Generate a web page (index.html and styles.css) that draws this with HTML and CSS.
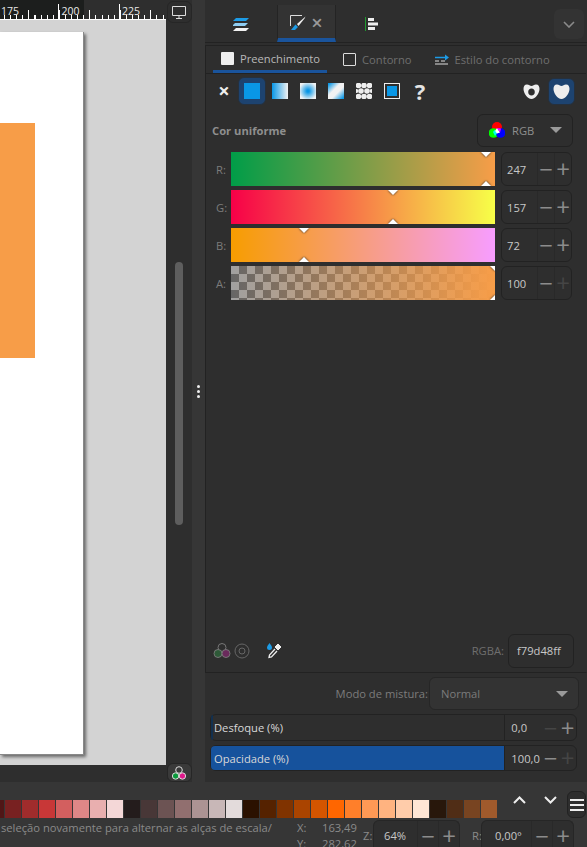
FILE: index.html
```html
<!DOCTYPE html>
<html lang="pt">
<head>
  <meta charset="UTF-8" />
  <title>Preenchimento e contorno</title>
  <link rel="stylesheet" href="styles.css">
</head>
<body>
  <div class="main">
    <div class="canvas-col">
      <div class="ruler">
        <span class="ruler-num">175</span>
        <span class="ruler-num">200</span>
        <span class="ruler-num">225</span>
      </div>
      <div class="canvas">
        <div class="page"><div class="orange-rect"></div></div>
      </div>
      <div class="hscroll"></div>
    </div>

    <div class="vscroll">
      <button class="display-btn">
        <svg width="14" height="13" viewBox="0 0 14 13"><path d="M.5.5h13v9H.5zM4 12.500h6M7 10v2" fill="none" stroke="#ddd"/></svg>
      </button>
      <div class="vthumb"></div>
      <button class="cms-btn">
        <svg width="16" height="16" viewBox="0 0 16 16">
          <circle cx="8" cy="5" r="3.300" fill="none" stroke="#ddd"/>
          <circle cx="4.600" cy="11" r="3.200" fill="#0a9a3c" stroke="#ddd"/>
          <circle cx="11.400" cy="11" r="3.200" fill="#e0188c" stroke="#ddd"/>
        </svg>
      </button>
    </div>

    <div class="handle"><i></i><i></i><i></i></div>

    <div class="panel">
      <div class="tabs">
        <div class="tab tab-layers">
          <svg width="16" height="13" viewBox="0 0 16 13">
            <path d="M3 0h13l-3 3H0z" fill="#1c9be6"/>
            <path d="M2 5h13l-3 3H-1z" fill="#8fcdf2"/>
            <path d="M3 10h13l-3 3H0z" fill="#f2f2f2"/>
          </svg>
        </div>
        <div class="tab tab-fill">
          <svg width="16" height="16" viewBox="0 0 16 16">
            <path d="M12 .5H.5V11" fill="none" stroke="#ddd"/>
            <path d="M15.500 1.500 7 9l1.500 2 6-7.500z" fill="#eee"/>
            <path d="M5.500 9.500 8 12 5 15H1z" fill="#1c9be6"/>
          </svg>
          <span class="tab-x">×</span>
        </div>
        <div class="tab tab-align">
          <svg width="14" height="14" viewBox="0 0 14 14">
            <path d="M.5 0v14" stroke="#1f9a2e"/>
            <path d="M3 1h6v3H3zM3 5.500h10v3H3zM3 10h7v3H3z" fill="#eee"/>
          </svg>
        </div>
        <button class="tabs-more">
          <svg width="12" height="7" viewBox="0 0 12 7"><path d="M1 1l5 5 5-5" fill="none" stroke="#8a8a8a" stroke-width="1.600"/></svg>
        </button>
      </div>

      <div class="frame">
        <div class="subtabs">
          <div class="subtab subtab-on"><span class="check-full"></span>Preenchimento</div>
          <div class="subtab subtab-line"><span class="check-line"></span>Contorno</div>
          <div class="subtab">
            <svg width="14" height="12" viewBox="0 0 14 12">
              <path d="M0 4.500h11" stroke="#1c9be6" stroke-width="1.500"/>
              <path d="M10 1.500l4 3-4 3z" fill="#1c9be6"/>
              <path d="M0 8h4M6 8h4M0 11h13" stroke="#ddd"/>
            </svg>
            Estilo do contorno
          </div>
        </div>

        <div class="paint-row">
          <span class="paint-x">×</span>
          <div class="paint-btn paint-on"><span class="p-flat"></span></div>
          <div class="paint-btn"><span class="p-linear"></span></div>
          <div class="paint-btn"><span class="p-radial"></span></div>
          <div class="paint-btn"><span class="p-mesh"></span></div>
          <div class="paint-btn">
            <svg width="16" height="16" viewBox="0 0 16 16">
              <g fill="#eee"><circle cx="2.500" cy="2.500" r="2.800"/><circle cx="8" cy="2.500" r="2.800"/><circle cx="13.500" cy="2.500" r="2.800"/><circle cx="2.500" cy="13.500" r="2.800"/><circle cx="8" cy="13.500" r="2.800"/><circle cx="13.500" cy="13.500" r="2.800"/><circle cx="5" cy="8" r="2.800"/><circle cx="11" cy="8" r="2.800"/><circle cx="0.500" cy="8" r="2"/><circle cx="15.500" cy="8" r="2"/></g>
            </svg>
          </div>
          <div class="paint-btn"><span class="p-swatch"></span></div>
          <div class="paint-btn paint-q">?</div>
          <div class="rule-btns">
            <div class="rule-btn">
              <svg width="17" height="17" viewBox="0 0 17 17"><path fill-rule="evenodd" d="M4 1.500C6 1.500 7 3 8.500 3S11 1.500 13 1.500C15.500 1.500 16.500 3.500 16.500 6 16.500 10 12.500 16 8.500 16S.5 10 .5 6C.5 3.500 1.500 1.500 4 1.500zM8.500 5.500c-2 0-3.300 1.500-3.300 3.500s1.300 3.500 3.300 3.500S11.800 11 11.800 9 10.500 5.500 8.500 5.500z" fill="#eee"/></svg>
            </div>
            <div class="rule-btn rule-on">
              <svg width="17" height="17" viewBox="0 0 17 17"><path d="M4 1.500C6 1.500 7 3 8.500 3S11 1.500 13 1.500C15.500 1.500 16.500 3.500 16.500 6 16.500 10 12.500 16 8.500 16S.5 10 .5 6C.5 3.500 1.500 1.500 4 1.500z" fill="#eee"/></svg>
            </div>
          </div>
        </div>

        <div class="mode-row">
          <span class="mode-title">Cor uniforme</span>
          <div class="rgb-combo">
            <svg width="16" height="16" viewBox="0 0 16 16">
              <circle cx="8" cy="5" r="5" fill="#f00"/>
              <circle cx="4.500" cy="11" r="4.800" fill="#0f0"/>
              <circle cx="11.500" cy="11" r="4.800" fill="#00f"/>
              <path d="M8 6l3 4.500-3 1-3-1z" fill="#fff"/>
              <path d="M8 11.500 5.500 8 4 10 6 14z" fill="#0fe"/>
              <path d="M8 6l3 4.500 1-4z" fill="#f0f"/>
            </svg>
            <span class="rgb-label">RGB</span>
            <span class="arrow"></span>
          </div>
        </div>

        <div class="sliders">
          <div class="slider-row">
            <label>R:</label>
            <div class="bar bar-r"><span class="mark mark-top mark-r"></span><span class="mark mark-bot mark-r"></span></div>
            <div class="spin"><span class="spin-val">247</span><span class="spin-btn">−</span><span class="spin-btn">+</span></div>
          </div>
          <div class="slider-row">
            <label>G:</label>
            <div class="bar bar-g"><span class="mark mark-top mark-g"></span><span class="mark mark-bot mark-g"></span></div>
            <div class="spin"><span class="spin-val">157</span><span class="spin-btn">−</span><span class="spin-btn">+</span></div>
          </div>
          <div class="slider-row">
            <label>B:</label>
            <div class="bar bar-b"><span class="mark mark-top mark-b"></span><span class="mark mark-bot mark-b"></span></div>
            <div class="spin"><span class="spin-val">72</span><span class="spin-btn">−</span><span class="spin-btn">+</span></div>
          </div>
          <div class="slider-row">
            <label>A:</label>
            <div class="bar bar-a"><span class="mark mark-top mark-a"></span><span class="mark mark-bot mark-a"></span></div>
            <div class="spin"><span class="spin-val">100</span><span class="spin-btn">−</span><span class="spin-btn spin-off">+</span></div>
          </div>
        </div>

        <div class="frame-foot">
          <svg class="foot-icon" width="18" height="17" viewBox="0 0 18 17">
            <circle cx="9" cy="5.500" r="4" fill="none" stroke="#777"/>
            <circle cx="5" cy="11.500" r="4" fill="#2e5a38" stroke="#777"/>
            <circle cx="13" cy="11.500" r="4" fill="#6a2a5c" stroke="#777"/>
          </svg>
          <svg class="foot-icon" width="16" height="16" viewBox="0 0 16 16">
            <circle cx="8" cy="8" r="7" fill="none" stroke="#666"/>
            <circle cx="8" cy="8" r="3" fill="none" stroke="#666"/>
          </svg>
          <svg class="foot-picker" width="16" height="16" viewBox="0 0 16 16">
            <path d="M3.500 0c1 1.500 2.500 3 2.500 4.500a2.500 2.500 0 0 1-5 0C1 3 2.500 1.500 3.500 0z" fill="#1c9be6"/>
            <path d="M12 1l3 3-2 2-1 1-3-3 1-1z" fill="#eee" stroke="#eee"/>
            <path d="M9 6 3.500 12 3 14.500 5.500 14 11 8" fill="none" stroke="#eee" stroke-width="1.300"/>
          </svg>
          <span class="rgba-label">RGBA:</span>
          <div class="rgba-box">f79d48ff</div>
        </div>
      </div>

      <div class="blend-row">
        <span class="blend-label">Modo de mistura:</span>
        <div class="blend-combo">Normal<span class="arrow"></span></div>
      </div>
      <div class="fx-row">
        <div class="fx-bar"><span class="fx-fill fx-none"></span><span class="fx-name">Desfoque (%)</span></div>
        <span class="fx-val">0,0</span><span class="fx-btn spin-off">−</span><span class="fx-btn">+</span>
      </div>
      <div class="fx-row fx-row-low">
        <div class="fx-bar"><span class="fx-fill fx-full"></span><span class="fx-name">Opacidade (%)</span></div>
        <span class="fx-val">100,0</span><span class="fx-btn">−</span><span class="fx-btn spin-off">+</span>
      </div>
    </div>
  </div>

  <div class="palette">
    <div class="swatches">
      <i class="cut" style="background:#501616"></i><i style="background:#782121"></i><i style="background:#a02c2c"></i><i style="background:#c83737"></i><i style="background:#d35f5f"></i><i style="background:#de8787"></i><i style="background:#e9afaf"></i><i style="background:#f4d7d7"></i><i style="background:#241c1c"></i><i style="background:#483737"></i><i style="background:#6c5353"></i><i style="background:#916f6f"></i><i style="background:#ac9393"></i><i style="background:#c8b7b7"></i><i style="background:#e3dbdb"></i><i style="background:#2b1100"></i><i style="background:#552200"></i><i style="background:#803300"></i><i style="background:#aa4400"></i><i style="background:#d45500"></i><i style="background:#ff6600"></i><i style="background:#ff7f2a"></i><i style="background:#ff9955"></i><i style="background:#ffb380"></i><i style="background:#ffccaa"></i><i style="background:#ffe6d5"></i><i style="background:#28170b"></i><i style="background:#502d16"></i><i style="background:#784421"></i><i style="background:#a05a2c"></i>
    </div>
    <div class="palette-tools">
      <svg width="13" height="8" viewBox="0 0 13 8"><path d="M1 7l5.500-5.500L12 7" fill="none" stroke="#eee" stroke-width="2"/></svg>
      <svg width="13" height="8" viewBox="0 0 13 8"><path d="M1 1l5.500 5.500L12 1" fill="none" stroke="#eee" stroke-width="2"/></svg>
      <button class="palette-menu"><i></i><i></i><i></i></button>
    </div>
  </div>

  <div class="status">
    <span class="status-msg">seleção novamente para alternar as alças de escala/</span>
    <div class="coords">
      <span>X:</span><span>163,49</span>
      <span>Y:</span><span>282,62</span>
    </div>
    <span class="status-lbl status-z">Z:</span>
    <div class="status-spin status-zoom"><span class="spin-val">64%</span><span class="spin-btn">−</span><span class="spin-btn">+</span></div>
    <span class="status-lbl status-r">R:</span>
    <div class="status-spin status-rot"><span class="spin-val">0,00°</span><span class="spin-btn">−</span><span class="spin-btn">+</span></div>
  </div>
</body>
</html>
```

FILE: styles.css
```css
* {
  box-sizing: border-box;
}

body {
  margin: 0;
  height: 847px;
  overflow: hidden;
  display: flex;
  flex-direction: column;
  background: #363636;
  color: #c8c8c8;
  font-family: "Open Sans", "Noto Sans", sans-serif;
  font-size: 11.2px;
}

button {
  padding: 0;
  font: inherit;
  display: flex;
  align-items: center;
  justify-content: center;
}

svg {
  flex-shrink: 0;
}

.main {
  display: flex;
  height: 782px;
  flex-shrink: 0;
}

/* canvas side */
.canvas-col {
  width: 166px;
  flex-shrink: 0;
  display: flex;
  flex-direction: column;
}

.ruler {
  height: 20px;
  display: flex;
  overflow: hidden;
  color: #e8e8e8;
  font-size: 10.500px;
  line-height: 14px;
  padding-top: 4px;
  padding-left: 1px;
  border-bottom: 1px solid #fff;
  background:
    linear-gradient(#fff, #fff) 58px 4px / 1px 16px no-repeat,
    linear-gradient(#fff, #fff) 119px 4px / 1px 16px no-repeat,
    repeating-linear-gradient(90deg, #fff 0 1px, transparent 1px 30.500px) 28px 100% / 100% 9px no-repeat,
    repeating-linear-gradient(90deg, #fff 0 1px, transparent 1px 6.100px) 4px 100% / 100% 4px no-repeat,
    linear-gradient(90deg, #1c1e1d 84px, #2e2e2e 84px);
}

.ruler-num {
  width: 60.500px;
  flex-shrink: 0;
}

.canvas {
  flex: 1;
  background: #d3d3d3;
  padding-top: 12px;
  padding-bottom: 10px;
}

.page {
  width: 84px;
  height: 723px;
  background: #fff;
  border-right: 1px solid #888;
  border-bottom: 1px solid #888;
  box-shadow: 2px 2px 3px rgba(0, 0, 0, 0.5);
  padding-top: 91px;
}

.orange-rect {
  width: 35px;
  height: 235px;
  background: #f79d48;
}

.hscroll {
  height: 17px;
  background: #2e2e2e;
}

.vscroll {
  width: 26px;
  flex-shrink: 0;
  background: #2e2e2e;
  display: flex;
  flex-direction: column;
  align-items: center;
}

.display-btn {
  width: 25px;
  height: 22px;
  margin-top: 1px;
  margin-bottom: 239px;
  background: #2e2e2e;
  border: 1px solid #262626;
  border-radius: 6px;
}

.vthumb {
  width: 8px;
  height: 263px;
  border-radius: 4px;
  background: #5e5e5e;
  margin-right: 1px;
}

.cms-btn {
  width: 25px;
  height: 19px;
  margin-top: auto;
  background: #3a3a3a;
  border: 1px solid #262626;
  border-radius: 6px;
}

.handle {
  width: 13px;
  flex-shrink: 0;
  background: #363636;
  display: flex;
  flex-direction: column;
  align-items: center;
  justify-content: center;
  gap: 2px;
}

.handle i {
  width: 3px;
  height: 3px;
  border-radius: 50%;
  background: #eee;
}

/* dock panel */
.panel {
  flex: 1;
  min-width: 0;
  background: #2e2e2e;
  display: flex;
  flex-direction: column;
}

.tabs {
  height: 38px;
  margin-top: 5px;
  display: flex;
  border-bottom: 1px solid #222;
}

.tab {
  display: flex;
  align-items: center;
  justify-content: center;
}

.tab-layers {
  width: 72px;
  padding-top: 1px;
}

.tab-fill {
  width: 59px;
  gap: 5px;
  background: #333;
  border-left: 1px solid #242424;
  border-right: 1px solid #242424;
  border-bottom: 4px solid #1a549c;
  padding-top: 3px;
}

.tab-x {
  color: #999;
  font-size: 20px;
  line-height: 16px;
  font-weight: 600;
}

.tab-align {
  width: 72px;
}

.tabs-more {
  width: 30px;
  height: 30px;
  margin-left: auto;
  margin-top: 4px;
  margin-right: 3px;
  border: 0;
  border-radius: 6px;
  background: #333;
}

.frame {
  height: 628px;
  margin-top: 2px;
  border: 1px solid #222;
  border-right-color: #2e2e2e;
  display: flex;
  flex-direction: column;
}

.subtabs {
  height: 28px;
  padding-left: 7px;
  display: flex;
  border-bottom: 1px solid #222;
  color: #6f6f6f;
  flex-shrink: 0;
}

.subtab {
  display: flex;
  align-items: center;
  gap: 6px;
  padding: 0 8px;
  padding-bottom: 1px;
  margin-right: 8px;
}

.subtab-on {
  color: #b9b9b9;
  width: 114px;
  border-bottom: 3px solid #1a549c;
  padding-bottom: 0;
}

.subtab-line {
  margin-right: 7px;
}

.check-full {
  width: 13px;
  height: 13px;
  flex-shrink: 0;
  background: #eee;
  border-radius: 1px;
}

.check-line {
  width: 13px;
  height: 13px;
  flex-shrink: 0;
  border: 1px solid #ddd;
  border-radius: 1px;
}

.paint-row {
  height: 34px;
  display: flex;
  align-items: center;
  padding-left: 12px;
  flex-shrink: 0;
}

.paint-x {
  width: 12px;
  color: #eee;
  font-size: 20px;
  font-weight: 700;
  line-height: 18px;
  text-align: center;
  margin-right: 8px;
}

.paint-btn {
  width: 28px;
  height: 28px;
  flex-shrink: 0;
  display: flex;
  align-items: center;
  justify-content: center;
  border-radius: 6px;
}

.paint-on {
  background: #1d4370;
  border: 1px solid #26303c;
}

.paint-btn span {
  display: block;
  width: 16px;
  height: 16px;
}

.p-flat {
  background: #0997e6;
}

.p-linear {
  background: linear-gradient(90deg, #0997e6, #f2f2f2);
}

.p-radial {
  background: radial-gradient(circle, #0997e6 10%, #eef2f4 80%);
}

.p-mesh {
  background: linear-gradient(135deg, #0997e6 5%, #f2f2f2 40%, #f2f2f2 60%, #0997e6 95%);
}

.paint-btn .p-swatch {
  background: #0997e6;
  border: 1px solid #eee;
  box-shadow: inset 0 0 0 2px #2e2e2e;
}

.paint-q {
  color: #e4e4e4;
  font-size: 22px;
  font-weight: 700;
}

.rule-btns {
  margin-left: auto;
  margin-right: 11px;
  display: flex;
  align-items: center;
  gap: 3px;
}

.rule-btn {
  width: 27px;
  height: 27px;
  display: flex;
  align-items: center;
  justify-content: center;
  border-radius: 6px;
}

.rule-on {
  background: #1d4370;
  border: 1px solid #26303c;
}

.mode-row {
  height: 34px;
  margin-top: 5px;
  padding-left: 6px;
  padding-right: 13px;
  display: flex;
  align-items: center;
  justify-content: space-between;
  flex-shrink: 0;
}

.mode-title {
  font-weight: 700;
  color: #8f8f8f;
}

.rgb-combo {
  width: 96px;
  height: 33px;
  background: #2e2e2e;
  border: 1px solid #222;
  border-radius: 6px;
  display: flex;
  align-items: center;
  padding-left: 11px;
  color: #8f8f8f;
}

.rgb-label {
  margin-left: 7px;
}

.arrow {
  width: 0;
  height: 0;
  margin-left: auto;
  margin-right: 10px;
  border-left: 6px solid transparent;
  border-right: 6px solid transparent;
  border-top: 6px solid #9a9a9a;
}

.sliders {
  margin-top: 5px;
  display: flex;
  flex-direction: column;
  gap: 4px;
  flex-shrink: 0;
}

.slider-row {
  display: flex;
  height: 34px;
  align-items: center;
}

.slider-row label {
  width: 25px;
  padding-left: 10px;
  color: #7c7c7c;
}

.bar {
  width: 264px;
  height: 34px;
  flex-shrink: 0;
  position: relative;
  overflow: hidden;
}

.bar-r {
  background: linear-gradient(90deg, #009d48, #f79d48);
}

.bar-g {
  background: linear-gradient(90deg, #f70048, #f7ff48);
}

.bar-b {
  background: linear-gradient(90deg, #f79d00, #f79dff);
}

.bar-a {
  background:
    linear-gradient(90deg, rgba(247, 157, 72, 0), #f79d48),
    repeating-conic-gradient(#666 0 25%, #a0a0a0 0 50%) 0 0 / 16px 16px;
}

.mark {
  position: absolute;
  width: 0;
  height: 0;
  margin-left: -5px;
  border-left: 5px solid transparent;
  border-right: 5px solid transparent;
  filter: drop-shadow(0 0 1px #222);
}

.mark-top {
  top: 0;
  border-top: 5px solid #fff;
}

.mark-bot {
  bottom: 0;
  border-bottom: 5px solid #fff;
}

.mark-r { left: 255px; }
.mark-g { left: 162px; }
.mark-b { left: 73px; }
.mark-a { left: 264px; }

.spin {
  width: 71px;
  height: 34px;
  margin-left: 6px;
  flex-shrink: 0;
  border: 1px solid #222;
  border-radius: 6px;
  display: flex;
  align-items: center;
}

.spin-val {
  width: 35px;
  padding-left: 5px;
  color: #c8c8c8;
}

.spin-btn {
  flex: 1;
  height: 100%;
  border-left: 1px solid #292929;
  display: flex;
  align-items: center;
  justify-content: center;
  color: #8c8c8c;
  font-size: 24px;
  line-height: 20px;
}

.spin-off {
  color: #454545;
}

.frame-foot {
  margin-top: auto;
  height: 40px;
  padding-left: 7px;
  padding-right: 12px;
  padding-bottom: 3px;
  display: flex;
  align-items: center;
  gap: 3px;
}

.foot-picker {
  margin-left: 13px;
}

.rgba-label {
  margin-left: auto;
  margin-right: 1px;
  color: #6e6e6e;
}

.rgba-box {
  width: 66px;
  height: 34px;
  border: 1px solid #222;
  border-radius: 6px;
  padding-left: 8px;
  display: flex;
  align-items: center;
  color: #c8c8c8;
}

.blend-row {
  margin-top: 4px;
  padding-right: 8px;
  display: flex;
  justify-content: flex-end;
  align-items: center;
  color: #7c7c7c;
}

.blend-combo {
  width: 150px;
  height: 33px;
  margin-left: 1px;
  background: #333;
  border: 1px solid #262626;
  border-radius: 6px;
  padding-left: 11px;
  display: flex;
  align-items: center;
}

.fx-row {
  height: 27px;
  margin: 4px 10px 0 5px;
  border: 1px solid #222;
  border-radius: 6px;
  display: flex;
  align-items: center;
}

.fx-row-low {
  height: 26px;
}

.fx-bar {
  width: 296px;
  height: 100%;
  position: relative;
  border-right: 1px solid #222;
  display: flex;
  align-items: center;
  color: #d8d8d8;
  padding-left: 3px;
}

.fx-fill {
  position: absolute;
  top: 0;
  bottom: 0;
  left: 0;
  border-radius: 4px 0 0 4px;
  background: #16529c;
}

.fx-none {
  width: 2px;
  background: #12304f;
}

.fx-full {
  width: 100%;
}

.fx-name {
  position: relative;
}

.fx-val {
  width: 37px;
  padding-left: 6px;
  color: #c8c8c8;
}

.fx-btn {
  width: 17px;
  text-align: center;
  font-size: 24px;
  line-height: 20px;
  color: #8c8c8c;
}

.fx-btn.spin-off {
  color: #454545;
}

/* palette + status */
.palette {
  height: 38px;
  display: flex;
  flex-shrink: 0;
}

.swatches {
  display: flex;
  margin-top: 18px;
  height: 18px;
}

.swatches i {
  width: 16px;
  margin-right: 1px;
}

.swatches .cut {
  width: 4px;
}

.palette-tools {
  flex: 1;
  display: flex;
  align-items: flex-start;
  padding-left: 15px;
  padding-top: 9px;
  gap: 18px;
}

.palette-tools svg {
  margin-top: 5px;
}

.palette-menu {
  width: 19px;
  height: 27px;
  margin-left: -8px;
  flex-shrink: 0;
  flex-direction: column;
  gap: 3px;
  background: #2e2e2e;
  border: 1px solid #222;
  border-radius: 6px;
}

.palette-menu i {
  width: 14px;
  height: 2px;
  background: #eee;
}

.status {
  height: 27px;
  display: flex;
  align-items: flex-start;
  color: #8a8a8a;
  flex-shrink: 0;
}

.status-msg {
  width: 297px;
  flex-shrink: 0;
  padding-left: 1px;
  line-height: 16px;
}

.coords {
  width: 66px;
  flex-shrink: 0;
  display: grid;
  grid-template-columns: 25px 1fr;
  line-height: 16px;
}

.status-lbl {
  line-height: 16px;
  padding-top: 8px;
}

.status-z {
  width: 10px;
  flex-shrink: 0;
}

.status-spin {
  height: 27px;
  flex-shrink: 0;
  border: 1px solid #262626;
  border-bottom: 0;
  border-radius: 6px 6px 0 0;
  display: flex;
  align-items: center;
  background: #2e2e2e;
}

.status-spin .spin-btn {
  flex: none;
  width: 21px;
  padding-top: 3px;
}

.status-zoom {
  width: 87px;
}

.status-zoom .spin-val {
  width: 43px;
  padding-left: 10px;
  padding-top: 3px;
}

.status-r {
  margin-left: 12px;
  width: 9px;
  flex-shrink: 0;
}

.status-rot {
  width: 93px;
}

.status-rot .spin-val {
  width: 50px;
  padding-left: 13px;
  padding-top: 3px;
}
```
